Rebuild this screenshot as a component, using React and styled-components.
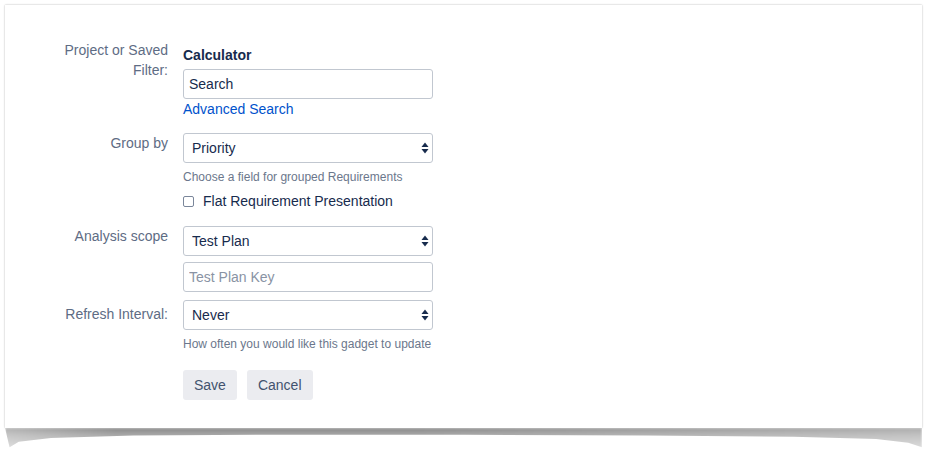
import React from 'react'
import styled, { createGlobalStyle } from 'styled-components'

const GlobalStyle = createGlobalStyle`
  html, body {
    margin: 0;
    padding: 0;
    background: #ffffff;
  }
  body {
    font-family: "Liberation Sans", Arial, sans-serif;
    font-size: 14px;
    color: #172b4d;
  }
`

const Page = styled.div`
  padding: 5px 0 0 5px;
  width: 917px;
`

const Card = styled.div`
  background: #ffffff;
  height: 423px;
  box-sizing: border-box;
  padding-top: 35px;
  box-shadow: 0 0 2px rgba(0, 0, 0, 0.22), 0 0 1px rgba(0, 0, 0, 0.12);
`

const Shadow = styled.div`
  height: 21px;
  background:
    linear-gradient(to right, rgba(255,255,255,0.35), rgba(255,255,255,0) 12%, rgba(255,255,255,0) 45%, rgba(255,255,255,0.3) 100%),
    linear-gradient(to bottom, #8a8a8a, #a9a9a9 35%, #d0d0d0 100%);
  clip-path: polygon(0 0, 100% 0, 100% 92%, 98.5% 70%, 95% 52%, 86% 42%, 70% 36%, 50% 32%, 30% 32%, 14% 36%, 5% 48%, 1.5% 66%, 0.5% 92%);
  filter: blur(0.8px);
`

const Form = styled.div`
  display: grid;
  grid-template-columns: 163px 250px;
  column-gap: 15px;
  align-items: start;
`

const Label = styled.div`
  text-align: right;
  color: #5e6c84;
  line-height: 20px;
  padding-top: ${p => p.$offset || 0}px;
  margin-top: ${p => p.$gap || 0}px;
`

const Field = styled.div`
  display: flex;
  flex-direction: column;
  margin-top: ${p => p.$gap || 0}px;
`

const Value = styled.div`
  font-weight: bold;
  line-height: 20px;
  margin-top: 5px;
  color: #172b4d;
`

const TextInput = styled.input`
  box-sizing: border-box;
  width: 250px;
  height: 30px;
  margin-top: ${p => p.$gap || 0}px;
  border: 1px solid #c1c7d0;
  border-radius: 3px;
  padding: 0 5px;
  font-family: inherit;
  font-size: 14px;
  color: #172b4d;
  background: #fff;
  outline: none;
  &::placeholder {
    color: #8993a4;
  }
`

const Link = styled.a`
  color: #0052cc;
  line-height: 20px;
  text-decoration: none;
  width: fit-content;
`

const SelectWrap = styled.div`
  position: relative;
  width: 250px;
  height: 30px;
`

const Select = styled.select`
  appearance: none;
  -webkit-appearance: none;
  box-sizing: border-box;
  width: 100%;
  height: 30px;
  border: 1px solid #c1c7d0;
  border-radius: 3px;
  padding: 0 24px 0 8px;
  font-family: inherit;
  font-size: 14px;
  color: #172b4d;
  background: #fff;
  outline: none;
`

const Arrows = styled.svg`
  position: absolute;
  right: 4px;
  top: 9px;
  pointer-events: none;
`

const Help = styled.div`
  font-size: 12px;
  line-height: 16px;
  color: #6b778c;
  margin-top: 6px;
`

const CheckRow = styled.label`
  display: flex;
  align-items: center;
  gap: 9px;
  line-height: 20px;
  margin-top: 6px;
  color: #172b4d;
`

const Box = styled.span`
  box-sizing: border-box;
  width: 11px;
  height: 11px;
  border: 1px solid #7a869a;
  border-radius: 2px;
  background: #fff;
`

const Buttons = styled.div`
  display: flex;
  gap: 10px;
  margin-top: 18px;
`

const Button = styled.button`
  height: 30px;
  border: none;
  border-radius: 3px;
  background: #ebecf0;
  color: #42526e;
  font-family: inherit;
  font-size: 14px;
  padding: 0 ${p => p.$pad || 11}px;
`

const SelectField = ({ value }) => (
  <SelectWrap>
    <Select defaultValue={value}>
      <option>{value}</option>
    </Select>
    <Arrows width="8" height="12" viewBox="0 0 8 12">
      <path d="M4 0.5 L7.5 5 L0.5 5 Z" fill="#172b4d" />
      <path d="M4 11.5 L7.5 7 L0.5 7 Z" fill="#172b4d" />
    </Arrows>
  </SelectWrap>
)

export default function App() {
  return (
    <Page>
      <GlobalStyle />
      <Card>
        <Form>
          <Label>Project or Saved<br />Filter:</Label>
          <Field>
            <Value>Calculator</Value>
            <TextInput $gap={4} defaultValue="Search" />
            <Link href="#">Advanced Search</Link>
          </Field>

          <Label $gap={14}>Group by</Label>
          <Field $gap={14}>
            <SelectField value="Priority" />
            <Help>Choose a field for grouped Requirements</Help>
            <CheckRow>
              <Box />
              Flat Requirement Presentation
            </CheckRow>
          </Field>

          <Label $gap={15}>Analysis scope</Label>
          <Field $gap={15}>
            <SelectField value="Test Plan" />
            <TextInput $gap={6} placeholder="Test Plan Key" />
          </Field>

          <Label $gap={8} $offset={4}>Refresh Interval:</Label>
          <Field $gap={8}>
            <SelectField value="Never" />
            <Help>How often you would like this gadget to update</Help>
            <Buttons>
              <Button $pad={11}>Save</Button>
              <Button $pad={11}>Cancel</Button>
            </Buttons>
          </Field>
        </Form>
      </Card>
      <Shadow />
    </Page>
  )
}
